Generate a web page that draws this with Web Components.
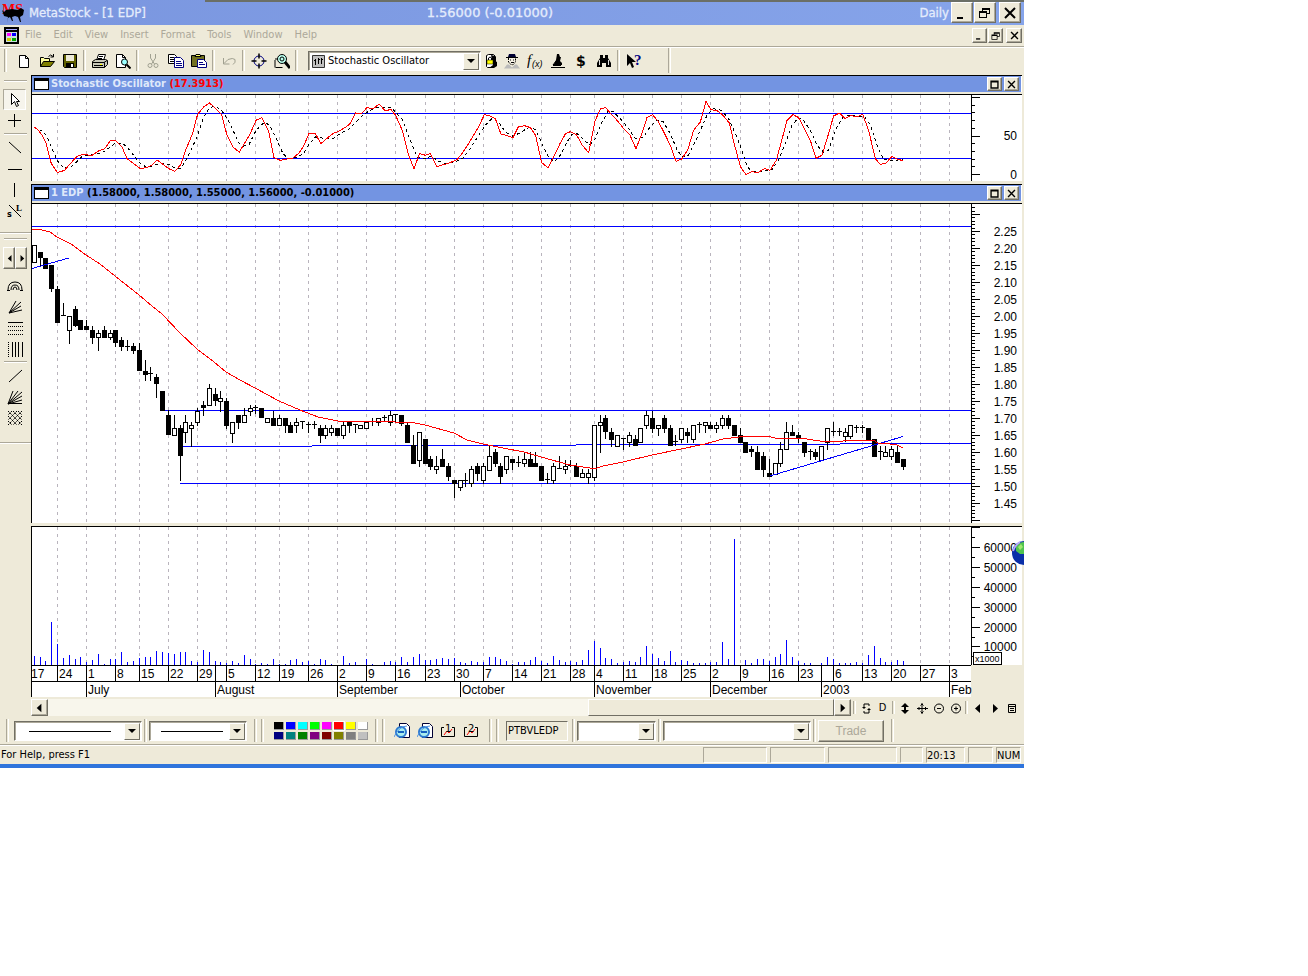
<!DOCTYPE html>
<html lang="en">
<head>
<meta charset="utf-8">
<title>MetaStock - [1 EDP]</title>
<style>
:root{--face:#eeead9;--blue:#7394e2;--shade:#aca899;--ui:"DejaVu Sans Condensed","DejaVu Sans",sans-serif}
body{margin:0;background:#fff;font:11px/16px var(--ui);color:#000}
</style>
</head>
<body>
<ms-app></ms-app>
<script>
const define=(name,html,setup)=>customElements.define(name,class extends HTMLElement{
  constructor(){super();this.attachShadow({mode:'open'})}
  connectedCallback(){
    this.shadowRoot.innerHTML=typeof html==='function'?html(this):html;
    if(setup)setup(this);
  }
});
const a=(el,n,d='')=>el.getAttribute(n)??d;

/* ---------- icons, 16 x 16 grid ---------- */
const K='stroke="#000" fill="none"';
const ICONS={
  new:'<path d="M3.5 2.5h6l3 3v9h-9z" fill="#fff" stroke="#000"/><path d="M9.5 2.5v3h3" '+K+'/>',
  open:'<path d="M1.5 13.5v-9h3l1 1h5v3" fill="#ffffa0" stroke="#000"/><path d="M1.5 13.5l3-5h11l-4 5z" fill="#808000" stroke="#000"/><path d="M9.500 3.500q2-3 4.500 0M14.500 1v3h-3" '+K+'/>',
  save:'<path d="M1.500 1.500h13v13h-12l-1-1z" fill="#606000" stroke="#000"/><path d="M4 2h8v6H4z" fill="#ece9d8"/><path d="M4 10h8v4H4z" fill="#000"/><path d="M9 11h2v3H9z" fill="#fff"/>',
  print:'<path d="M4.500 7.500l2-6h7l-2 6z" fill="#fff" stroke="#000"/><path d="M7 3.500h4M6 5.500h4" '+K+'/><path d="M.5 8.500l3-2h10l2 1v4l-3 3h-12z" fill="#c8c8b8" stroke="#000"/><path d="M.5 9.500h12v5M12 9.500l3-2M2 12.500h9" '+K+'/><path d="M8 11h2v1H8z" fill="#ff0"/>',
  preview:'<path d="M1.500 1.500h6l3 3v10h-9z" fill="#fff" stroke="#000"/><path d="M7.500 1.500v3h3" '+K+'/><circle cx="9.500" cy="9" r="3" fill="#9ff" stroke="#000"/><path d="M11.500 11.500l4 4" stroke="#000" stroke-width="2"/>',
  cut:'<g stroke="#a0a090" fill="none"><path d="M5.500 1v4l4 6M10.500 1v4l-4 6"/><circle cx="5" cy="12.500" r="2"/><circle cx="11" cy="12.500" r="2"/></g>',
  copy:'<path d="M.5 1.500h6l2 2v7h-8z" fill="#fff" stroke="#000"/><path d="M2 4.500h4M2 6.500h5M2 8.500h5" '+K+'/><path d="M6.500 4.500h6l3 3v7h-9z" fill="#fff" stroke="#000080"/><path d="M8 8.500h5M8 10.500h6M8 12.500h6" stroke="#000080"/>',
  paste:'<path d="M.5 2.500h13v11h-13z" fill="#707020" stroke="#000"/><path d="M4 3.500h6l-1-2H5z" fill="#ff6" stroke="#000"/><path d="M6.500 6.500h6l3 3v5h-9z" fill="#fff" stroke="#000080"/><path d="M8 9.500h4M8 11.500h6" stroke="#000080"/>',
  undo:'<path d="M2.500 5v6h6M3 10.500l4-4q5-2 7 0 1 3-2 5" stroke="#a0a090" fill="none"/>',
  target:'<circle cx="8" cy="8" r="5" stroke="#000080" fill="none"/><path d="M8 .5v5M8 10.500v5M.5 8h5M10.500 8h5" stroke="#000" stroke-width="1.500"/>',
  zoom:'<path d="M1 14.500V7m0-1h5M1.500 14.500h7" '+K+'/><circle cx="8" cy="6" r="4.500" fill="#bfe" stroke="#000"/><circle cx="8" cy="6" r="2" '+K+'/><path d="M11 9l5 6" stroke="#000" stroke-width="3"/>',
  lock:'<path d="M3.500 2.500l2-1h5l2 2v9l-2 2h-6l-1-1z" fill="#fff" stroke="#000"/><path d="M8 2l4 1v5l2 1v4l-3 2H6l4-3z" fill="#000"/><path d="M4 7h6v4H4z" fill="#ff0" stroke="#000" stroke-width=".5"/><path d="M5.500 7V5q1.500-2 3 0v2" '+K+'/>',
  man:'<path d="M4 4l1-3h6l1 3z" fill="#003"/><path d="M2 4.500h12" '+K+'/><path d="M4.500 5v4l3 3h1l3-3V5" fill="#f4f0e4" stroke="#000" stroke-dasharray="2 1"/><path d="M6 7h1M9 7h1M7 9.500h3" stroke="#000"/><path d="M0 15.500l3-4h2l3 3 3-3h2l3 4z" fill="#bbb"/>',
  fx:'<text x="0" y="12" font-family="Liberation Serif,serif" font-style="italic" font-size="15">f</text><text x="5" y="14" font-family="Liberation Sans,sans-serif" font-style="italic" font-size="9">(x)</text>',
  wizard:'<path d="M1 14h14v1H1zM3 11h8v2H3z"/><path d="M7 1h2l1 3h1l-1 4 2 2v2H7L4 11l2-4z"/><path d="M3 12l3-4" '+K+'/>',
  dollar:'<text x="3" y="13" font-family="DejaVu Sans,sans-serif" font-weight="bold" font-size="14">$</text>',
  binoc:'<path d="M4 2h3v3h2V2h3v3l3 5v4h-5v-4H6v4H1v-4l3-5z"/><path d="M3.500 7v5M12.500 7v5" stroke="#ddd"/>',
  help:'<path d="M1 1v12l3-3 2 5 2-1-2-5h4z" fill="#000"/><text x="8" y="12" font-family="Liberation Serif,serif" font-weight="bold" font-size="15" fill="#000080">?</text>',
  pointer:'<path d="M4.500 1.500v11l3-3 2 5 2-1-2-4h3z" fill="#fff" stroke="#000"/>',
  cross:'<path d="M7.500 1v13M1 7.500h13" '+K+'/>',
  diag:'<path d="M2 2l12 11" '+K+'/>',
  horiz:'<path d="M1 8.500h14" '+K+'/>',
  vert:'<path d="M7.500 1v14" '+K+'/>',
  sl:'<path d="M2 2l12 12" '+K+'/><text x="0" y="14" font-family="DejaVu Sans,sans-serif" font-weight="bold" font-size="8">s</text><text x="9" y="8" font-family="Liberation Serif,serif" font-weight="bold" font-size="9">L</text>',
  arcs:'<path d="M1 12q0-8 7-8t7 8M4 12q0-5 4-5t4 5M6 12q0-3 2-3t2 3M0 12.500h3M13 12.500h3" '+K+'/>',
  fan:'<path d="M2 14L14 3M2 14L14 7M2 14L15 11M2 14L9 2" '+K+'/>',
  dots:'<path d="M1 2.500h15" stroke="#000"/><path d="M1 6.500h15M1 10.500h15M1 14.500h15" stroke="#000" stroke-dasharray="1 1"/>',
  vlines:'<path d="M5.500 1v15M8.500 1v15M11.500 1v15M15.500 1v15" stroke="#000"/><path d="M1.500 1v15" stroke="#000" stroke-dasharray="1 1"/>',
  line:'<path d="M2 14L15 2" '+K+'/>',
  gann:'<path d="M1 15L6 2M1 15L11 2M1 15L15 3M1 15L15 7M1 15L15 11M1 14.500h14" '+K+'/>',
  hatch:'<path d="M1 1l14 14M1 6l9 9M1 11l4 4M6 1l9 9M11 1l4 4M15 1L1 15M15 6l-9 9M15 11l-4 4M10 1L1 10M5 1L1 5" stroke="#000" stroke-dasharray="2 1"/>',
  ie:'<path d="M5.500.5h7l3 3v11h-10z" fill="#fff" stroke="#003"/><circle cx="7" cy="9" r="5" fill="#aee" stroke="#2a78d0" stroke-width="2"/><path d="M4 9h6" stroke="#1560c0" stroke-width="2"/><path d="M0 14Q5 3 13 3" stroke="#4a90e0" fill="none"/>',
  one:'<path d="M4 4.500H1.500v9h13v-9H12" fill="none" stroke="#000"/><path d="M4 12l3-4 2 2 3-4" stroke="#f00" fill="none"/><text x="5" y="9" font-family="DejaVu Sans,sans-serif" font-size="10">1</text>',
  two:'<path d="M4 4.500H1.500v9h13v-9H12" fill="none" stroke="#000"/><path d="M4 12l3-4 2 2 3-4" stroke="#f00" fill="none"/><text x="5" y="9" font-family="DejaVu Sans,sans-serif" font-size="10">2</text>',
  left:'<path d="M10 4v9L5 8.500z"/>', right:'<path d="M6 4v9l5-4.500z"/>',
  refresh:'<path d="M11 6V4H6v3M6 11v2h5v-3" '+K+'/><path d="M4 7h4L6 9zM9 10h4l-2-2z"/>',
  updown:'<path d="M8 3l4 4H9v3h3l-4 4-4-4h3V7H4z"/>',
  move:'<path d="M8 3v11M3 8.500h11M6.500 5.500L8 4l1.500 1.500M6.500 11.500L8 13l1.500-1.500M5.500 7L4 8.500 5.500 10M11 7l1.500 1.500L11 10" '+K+'/>',
  minus:'<circle cx="8" cy="8.500" r="4.500" '+K+'/><path d="M6 8.500h4" '+K+'/>',
  plus:'<circle cx="8" cy="8.500" r="4.500" '+K+'/><path d="M6 8.500h4M8 6.500v4" '+K+'/>',
  list:'<path d="M4.500 4.500h7v8h-7zM5 6.500h6M6 8.500h4M6 10.500h4" '+K+'/>',
  min:'<path d="M3 12h6v2H3z"/>',
  restore:'<path d="M5 3h8v6h-3v4H2V6h3zM6 5v1h4v2h2V5zM3 8v4h6V8z" fill-rule="evenodd"/>',
  max:'<path d="M2 2h12v12H2zM4 5v7h8V5z" fill-rule="evenodd"/>',
  close:'<path d="M3 3l10 10M13 3L3 13" stroke="#000" stroke-width="2"/>'
};
const icon=(n,s=16)=>`<svg width="${s}" height="${s}" viewBox="0 0 16 16" aria-hidden="true">${ICONS[n]||''}</svg>`;

define('ms-tool',el=>`<style>
:host{display:block;width:23px;height:21px;flex:none}
button{width:100%;height:100%;padding:0;border:0;background:none;display:grid;place-items:center;font:inherit;color:inherit}
svg{display:block}
:host([raised]) button{background:var(--face);border:1px solid;border-color:#fff #716f64 #716f64 #fff;box-shadow:inset -1px -1px var(--shade)}
:host([pressed]) button{background:#f6f4ec;border:1px solid;border-color:var(--shade) #fff #fff var(--shade)}
</style><button type="button" aria-label="${a(el,'label',a(el,'icon'))}">${a(el,'icon')?icon(a(el,'icon'),a(el,'size',16)):'<slot></slot>'}</button>`);

define('ms-sep',`<style>:host{display:block;flex:none;width:1px;margin:0 2px;border-left:1px solid var(--shade);border-right:1px solid #fff;box-sizing:content-box;align-self:stretch}
:host([flat]){width:auto;height:0;margin:2px 4px;border:0;border-top:1px solid var(--shade);border-bottom:1px solid #fff}</style>`);

define('ms-titlebar',`<style>
:host{display:grid;grid-template-columns:5fr 7fr;height:25px;background:linear-gradient(90deg,#7a96df,#86a4ea);position:relative;color:#e4ecfc;font:13px/22px "DejaVu Sans Condensed",sans-serif;-webkit-text-stroke:0.3px}
:host::before{content:"";position:absolute;left:20%;right:0;top:0;height:2px;background:#6b6f66}
div{display:flex;align-items:center}
.l svg{margin:0 4px 0 2px}
.v{font-family:"DejaVu Sans",sans-serif}
.b{gap:1px;padding-right:3px}.b ms-tool{width:22px}.b ms-tool:last-child{margin-left:2px}
.d{margin-left:auto;margin-right:2px}
</style>
<div class="l"><svg width="23" height="22" viewBox="0 0 23 22" aria-hidden="true"><text x="0" y="12" font-family="Liberation Serif,serif" font-weight="bold" font-size="14" fill="#f00">MS</text><path d="M0 8l2 2 2-2 6-1 6 1 3-2 3 2-1 5-3 2 1 5h-1l-2-5-3-1-3 1 1 4h-1l-2-4-2 1-1 5H5l1-6-4-1z"/></svg><span>MetaStock - [1 EDP]</span></div>
<div><span class="v">1.56000 (-0.01000)</span><span class="d">Daily</span><div class="b"><ms-tool raised icon="min" label="Minimize"></ms-tool><ms-tool raised icon="restore" label="Restore"></ms-tool><ms-tool raised icon="close" label="Close"></ms-tool></div></div>`);

define('ms-menubar',`<style>
:host{display:flex;align-items:center;height:21px;border-bottom:1px solid var(--shade);box-shadow:0 1px #fff;color:#aca899}
nav{display:flex;gap:12px;margin-left:6px;flex:1;line-height:18px;padding-bottom:2px}
a{color:inherit;text-decoration:none}
svg{margin-left:4px}
.b{display:flex;gap:1px;padding-right:2px}.b ms-tool{width:15px;height:15px}.b ms-tool:last-child{margin-left:2px;width:16px}
</style>
<svg width="15" height="17" viewBox="0 0 15 17" aria-hidden="true"><path d="M0 0h15v17H0z"/><path d="M2 2h11v1H2z" fill="#aaf"/><path d="M2 5h11v10H2z" fill="#cdd"/><path d="M3 6h4v3H3z" fill="#f0f"/><path d="M8 6h4v3H8z" fill="#00f"/><path d="M3 11h4v3H3z" fill="#cc0"/><path d="M8 11h4v3H8z" fill="#0a0"/></svg>
<nav>${['File','Edit','View','Insert','Format','Tools','Window','Help'].map(t=>`<a href="#${t.toLowerCase()}">${t}</a>`).join('')}</nav>
<div class="b"><ms-tool raised icon="min" size="11" label="Minimize chart"></ms-tool><ms-tool raised icon="restore" size="12" label="Restore chart"></ms-tool><ms-tool raised icon="close" size="11" label="Close chart"></ms-tool></div>`);

define('ms-combo',el=>`<style>
:host{display:block;position:relative;flex:none;height:20px}
select{appearance:none;width:100%;height:100%;border:1px solid;border-color:#716f64 #fff #fff #716f64;box-shadow:inset 1px 1px var(--shade);background:#fff;border-radius:0;margin:0;padding:0 18px 0 ${a(el,'icon')?19:4}px;font:11px/16px var(--ui);color:#000}
i{position:absolute;right:2px;top:2px;bottom:1px;width:14px;background:var(--face);border:1px solid;border-color:#fff #716f64 #716f64 #fff;display:grid;place-items:center;pointer-events:none}
.k{position:absolute;left:4px;top:4px}
.s{position:absolute;left:12%;right:24%;top:10px;border-top:1px solid #000}
</style><select aria-label="${a(el,'label')}"><option>${a(el,'value')}</option></select>${el.hasAttribute('sample')?'<span class="s"></span>':''}
${a(el,'icon')?'<svg class="k" width="13" height="13" viewBox="0 0 13 13"><path d="M.5.5h12v12H.5z" fill="#c0c0c0" stroke="#333"/><path d="M3.500 4v6M2 5.500h2M6.500 3v6M6 4.500h2M9.500 3v6M9 4.500h2" stroke="#000"/></svg>':''}
<i><svg width="8" height="4"><path d="M0 0h8L4 4z"/></svg></i>`);

define('ms-toolbar',`<style>
:host{display:flex;align-items:center;height:27px;padding:0 0 0 4px}
ms-combo{width:173px;margin-left:8px}
.n{width:19px}.g{margin:2px 5px 2px 0}ms-sep{margin:3px 2px}.e{margin:1px 0 1px 23px}
</style><ms-sep class="g"></ms-sep>
<ms-tool icon="new"></ms-tool><ms-tool icon="open"></ms-tool><ms-tool icon="save"></ms-tool><ms-sep></ms-sep>
<ms-tool icon="print"></ms-tool><ms-tool icon="preview"></ms-tool><ms-sep></ms-sep>
<ms-tool icon="cut"></ms-tool><ms-tool icon="copy"></ms-tool><ms-tool icon="paste"></ms-tool><ms-sep></ms-sep>
<ms-tool icon="undo"></ms-tool><ms-sep></ms-sep><ms-tool icon="target"></ms-tool><ms-tool icon="zoom"></ms-tool><ms-sep></ms-sep>
<ms-combo icon="1" value="Stochastic Oscillator" label="Indicator"></ms-combo>
<ms-tool class="n" icon="lock"></ms-tool><ms-tool icon="man"></ms-tool><ms-tool icon="fx"></ms-tool><ms-tool icon="wizard"></ms-tool><ms-tool icon="dollar"></ms-tool><ms-tool icon="binoc"></ms-tool><ms-sep></ms-sep><ms-tool icon="help"></ms-tool><ms-sep class="e"></ms-sep>`);

define('ms-drawbar',`<style>
:host{display:flex;flex-direction:column;width:31px;padding-top:3px;box-sizing:border-box}
ms-tool{margin-left:3px}.pair{display:flex;margin:5px 0 6px 3px}.pair ms-tool{width:12px;height:22px;margin:0}
.big{margin:11px 0 2px}.end{margin:14px 0 0}.grip{margin-bottom:7px}
</style><ms-sep flat class="grip"></ms-sep>
<ms-tool pressed icon="pointer"></ms-tool><ms-tool icon="cross"></ms-tool><ms-sep flat></ms-sep>
<ms-tool icon="diag"></ms-tool><ms-tool icon="horiz"></ms-tool><ms-tool icon="vert"></ms-tool><ms-tool icon="sl"></ms-tool>
<ms-sep flat class="big"></ms-sep><ms-sep flat></ms-sep>
<div class="pair"><ms-tool raised icon="left" size="12"></ms-tool><ms-tool raised icon="right" size="12"></ms-tool></div>
<ms-tool icon="arcs"></ms-tool><ms-tool icon="fan"></ms-tool><ms-tool icon="dots"></ms-tool><ms-tool icon="vlines"></ms-tool><ms-sep flat></ms-sep>
<ms-tool icon="line"></ms-tool><ms-tool icon="gann"></ms-tool><ms-tool icon="hatch"></ms-tool><ms-sep flat class="end"></ms-sep>`);

define('ms-pane',el=>`<style>
:host{display:block;border-top:1px solid #000;border-left:1px solid #000;margin-bottom:3px;background:#fff}
header{display:flex;align-items:center;height:16px;margin-right:1px;background:var(--blue);font-weight:bold;color:#dfe8fa;white-space:nowrap}
.w{width:13px;height:8px;border:1px solid #000;border-top-width:3px;background:#fff;margin:0 2px}
.f{height:2px;background:var(--face);border-bottom:1px solid #000}
.t{flex:1}ms-tool{width:15px;height:14px;margin-right:2px}
</style>${a(el,'name')?`<header><span class="w"></span><span class="t">${a(el,'name')} <slot name="value"></slot></span><ms-tool raised icon="max" size="11" label="Maximize"></ms-tool><ms-tool raised icon="close" size="11" label="Close"></ms-tool></header><div class="f"></div>`:''}<slot></slot>`);

/* ---------- chart data ---------- */
const X=i=>Math.floor(34.2+5.834*i)+.5;
const WEEKS=[57,86,115,139,168,197,226,255,279,308,337,366,395,425,454,483,512,541,570,594,623,652,681,710,740,769,798,833,862,891,920,949];
const DATES=[24,1,8,15,22,29,5,12,19,26,2,9,16,23,30,7,14,21,28,4,11,18,25,2,9,16,23,6,13,20,27,3];
const MONTHS=[[86,'July'],[215,'August'],[337,'September'],[460,'October'],[594,'November'],[710,'December'],[821,'2003'],[949,'Feb']];
/* each candle: wick top, body top, body bottom, wick bottom, f(illed) / h(ollow) / d(oji) */
const CANDLES=`245 245 262 262 h;252 252 257 265 f;258 258 268 268 f;265 265 288 291 f;286 289 322 322 f;303 315 315 315 d;316 316 330 343 h;306 309 325 326 f;320 320 329 329 f;320 326 329 329 f;326 330 337 343 f;330 333 337 350 h;326 330 337 337 f;330 333 337 339 h;330 330 342 346 f;337 340 346 350 f;340 346 346 350 d;343 346 350 353 f;343 350 370 370 f;360 371 374 380 f;367 373 373 380 d;374 377 383 397 f;391 391 410 410 f;410 415 434 434 f;415 428 435 435 h;425 428 455 480 f;415 422 432 442 h;422 425 428 446 h;408 411 422 425 h;401 405 407 415 f;384 388 405 405 h;388 394 400 405 f;391 398 401 411 h;398 401 425 428 f;422 422 433 442 h;415 415 422 428 f;408 415 422 422 h;405 408 411 415 h;405 407 407 413 d;408 408 417 417 f;418 418 422 422 h;411 418 425 425 f;415 418 425 425 h;418 418 425 432 f;422 425 432 432 f;418 422 425 432 h;421 421 421 428 d;422 424 424 432 d;421 424 424 428 d;425 428 435 442 f;425 428 435 438 h;425 428 432 435 h;428 428 435 435 f;422 425 435 438 h;422 422 425 432 f;424 424 424 432 d;425 425 428 428 h;422 422 428 428 h;418 421 421 425 d;418 418 422 425 h;415 417 417 421 d;411 415 422 425 h;414 414 414 422 d;415 415 423 425 f;422 425 442 442 f;435 445 463 463 f;432 432 460 466 h;439 439 463 463 f;456 459 466 469 f;456 466 469 473 h;449 459 466 466 f;463 466 476 480 f;480 480 483 497 f;480 480 487 490 h;473 480 480 486 d;466 469 483 486 h;463 466 473 480 f;463 466 480 483 h;446 456 470 470 h;449 452 463 466 f;463 466 476 483 f;456 456 469 473 h;459 459 462 469 f;456 462 462 466 d;452 459 463 466 h;452 459 466 466 f;452 463 466 466 f;466 466 480 480 f;473 479 479 483 d;463 466 480 483 h;456 468 468 468 d;460 466 469 473 h;460 465 465 466 d;463 466 476 476 f;469 473 477 477 h;469 473 477 483 h;425 425 477 480 h;415 422 425 452 h;415 418 431 438 f;428 432 439 446 f;435 435 446 446 h;438 438 438 449 d;432 435 442 446 h;435 439 445 445 f;428 428 442 442 h;411 415 425 428 h;411 418 428 432 f;425 425 428 435 h;415 418 428 432 f;425 428 445 445 f;435 441 441 445 d;428 428 439 442 h;428 432 435 442 f;425 425 439 442 h;422 424 424 432 d;422 422 425 432 h;422 425 428 428 f;422 425 428 432 h;415 418 425 428 h;415 418 425 428 f;425 425 435 435 f;428 435 442 442 f;442 442 452 452 f;446 449 451 456 f;446 452 469 469 f;452 456 469 476 f;459 473 476 476 f;463 463 474 474 h;442 449 463 466 h;422 432 449 449 h;425 432 435 435 f;432 435 438 442 f;442 442 452 456 f;449 451 451 459 d;449 452 456 459 f;446 446 460 460 h;428 428 442 449 h;422 431 431 435 d;428 431 431 435 d;428 432 436 441 h;425 425 436 438 h;425 427 427 432 d;425 427 427 432 d;428 428 439 439 f;439 439 456 456 f;446 451 451 459 d;446 452 456 456 h;446 449 456 459 h;446 452 462 462 f;459 459 466 469 f`.split(';').map(s=>s.split(' '));
const VOLUME=[9,8,4,43,21,7,10,6,8,3,5,11,1,6,6,13,3,4,7,8,8,14,13,12,11,13,13,4,3,15,13,4,3,2,4,2,10,6,1,2,1,6,1,1,5,6,3,4,1,6,5,1,0,9,2,3,0,6,1,0,3,4,3,8,3,8,11,5,5,6,7,6,7,3,2,4,3,3,8,8,6,4,1,3,3,5,8,4,2,9,5,3,4,3,5,15,24,17,7,6,2,3,4,3,8,19,11,7,4,14,3,5,4,2,2,2,3,3,23,6,126,0,5,2,6,6,4,8,11,25,8,4,2,2,0,2,8,6,2,2,2,3,2,10,19,7,3,3,5,4];
/* oscillator lines, in thirds of a pixel from the pane's left edge */
const OSC='12,110 24,120 36,135 48,160 54,185 63,220 82,247 103,240 120,220 140,198 157,193 185,195 205,182 222,176 242,149 258,152 275,170 290,205 310,220 330,235 348,232 365,225 380,209 398,222 415,235 434,243 452,222 466,180 486,132 502,72 520,50 538,38 556,55 574,72 590,135 608,170 627,186 645,155 660,130 677,90 694,82 715,122 731,202 750,210 770,206 788,203 806,188 820,168 836,130 855,130 872,160 890,144 908,130 926,122 942,113 958,102 976,68 994,70 1010,52 1028,56 1046,41 1064,61 1082,58 1096,75 1116,120 1135,195 1151,235 1168,190 1186,195 1200,190 1220,229 1240,223 1257,218 1280,208 1295,190 1315,160 1345,110 1362,73 1380,77 1395,85 1412,132 1428,135 1448,142 1464,110 1482,106 1500,112 1516,135 1534,217 1553,232 1570,200 1590,158 1606,130 1621,124 1639,134 1656,165 1675,187 1694,92 1710,56 1726,52 1743,72 1762,92 1780,115 1798,132 1817,175 1834,132 1850,82 1867,73 1885,95 1903,130 1920,165 1937,213 1954,206 1972,180 1990,120 2010,95 2027,34 2042,58 2062,62 2078,75 2097,98 2113,165 2131,230 2147,253 2165,244 2183,247 2202,235 2219,240 2238,210 2253,155 2270,90 2288,73 2305,82 2322,115 2340,150 2357,204 2375,195 2395,130 2410,77 2427,68 2444,84 2462,76 2480,80 2497,72 2515,120 2535,205 2550,223 2567,218 2585,198 2602,207 2618,211';
const SIG='12,110 34,121 50,138 65,175 82,212 100,233 120,232 138,216 155,199 180,192 205,190 222,184 240,170 256,158 275,158 290,170 310,195 330,220 348,230 365,228 380,222 398,219 415,222 432,232 450,235 466,212 486,172 502,135 520,80 538,52 556,48 574,60 590,84 608,120 627,160 640,167 656,163 675,125 690,105 705,96 720,108 740,150 758,190 775,205 800,201 820,190 838,160 856,140 875,143 908,145 930,130 958,115 976,96 1000,72 1025,57 1046,50 1082,52 1096,65 1116,88 1140,150 1160,200 1180,206 1205,197 1222,212 1245,219 1270,216 1298,204 1320,175 1345,135 1365,105 1385,85 1405,95 1425,125 1448,138 1470,127 1495,112 1515,117 1535,160 1555,200 1572,215 1590,195 1610,155 1625,132 1640,130 1660,148 1678,164 1695,145 1715,95 1735,60 1750,65 1770,85 1795,115 1815,145 1840,140 1858,112 1880,90 1898,94 1920,130 1940,178 1955,200 1972,198 1990,165 2010,120 2030,75 2050,55 2072,60 2095,85 2115,130 2135,180 2150,228 2165,243 2200,243 2225,238 2245,210 2265,160 2285,105 2305,82 2320,90 2340,120 2360,165 2380,185 2395,180 2415,120 2435,84 2450,76 2490,78 2502,77 2520,105 2540,165 2560,208 2590,211 2618,207';
const scale=s=>s.split(' ').map(p=>{const[x,y]=p.split(',');return (30.3+x/3).toFixed(1)+','+(90.3+y/3).toFixed(1)}).join(' ');
const grid=(t,b)=>`<path d="${WEEKS.map(x=>`M${x+.5} ${t}V${b}`).join('')}" stroke="#b9b4bd" stroke-dasharray="3 4"/>`;
const tick=(y,l)=>`M971 ${Math.round(y)+.5}h${l}`;
const hl=(x1,x2,y)=>`M${x1} ${y}.5H${x2}`;
const svg=(t,h,body,label)=>`<style>:host{display:block}svg{display:block;overflow:visible;width:100%;height:auto;font:12px "Liberation Sans",sans-serif}.p{shape-rendering:crispEdges}path,polyline{fill:none}</style><svg viewBox="32 ${t} 990 ${h}" role="img" aria-label="${label}">${body}</svg>`;
const lab=(y,s)=>`<text x="1017" y="${y}" text-anchor="end">${s}</text>`;

define('ms-oscillator',()=>{
  let t='';for(let i=0;i<=10;i++)t+=tick(97+i*7.7,i%5?4:9);
  return svg(95,86,`${grid(95,181)}<g class="p"><path d="${hl(32,971,113)}${hl(32,971,158)}" stroke="#00f"/><path d="M971.5 95V181${t}" stroke="#000"/><polyline points="${scale(SIG)}" stroke="#000" stroke-dasharray="3 3"/><polyline points="${scale(OSC)}" stroke="#f00"/></g>${lab(140,50)}${lab(179,0)}`,'Stochastic oscillator')});

define('ms-price',()=>{
  let t='',l='';
  for(let c=232;c>=140;c--){t+=tick(231+(225-c)*3.4,c%5?4:9);if(c%5===0&&c<=225&&c>=145)l+=lab(Math.round(236+(225-c)*3.4),(c/100).toFixed(2))}
  const c=CANDLES.map(([h,t,b,lo,k],i)=>{h=+h;t=+t;b=+b;lo=+lo;const x=X(i);
    if(k==='d')return `<path d="M${x} ${h}V${lo+1}M${x-2.5} ${t+.5}h5" stroke="#000"/>`;
    return `<path d="M${x} ${h}V${t}M${x} ${b}V${lo+1}" stroke="#000"/><rect x="${x-2}" y="${t+.5}" width="4" height="${b-t}" fill="${k==='f'?'#000':'#fff'}" stroke="#000"/>`}).join('');
  return svg(204,319,`${grid(204,523)}<g class="p"><path d="${hl(32,971,226)}${hl(162,971,410)}${hl(180,312,446)}${hl(312,576,445)}${hl(576,840,444)}${hl(840,971,443)}${hl(180,971,483)}" stroke="#00f"/>${c}
<path d="M32 268.500L69 258M770 476L903 436.500" stroke="#00f"/>
<polyline stroke="#f00" points="32,229 42,230 50,232 57,237 71,244 86,255 100,264 115,276 139,295 152,306 162,314 180,333 197,349 214,362 226,372 240,380 255,388 279,401 300,410 318,417 338,421 380,421 395,422 410,422 425,425 454,433 467,440 483,444 503,448 524,452 541,457 570,465 590,468 597,468 603,466 623,462 652,455 681,449 705,444 723,439 747,436 767,436 775,438 800,438 820,441 843,441 847,440 873,440 878,443 890,444 897,445 903,448"/>
<path d="M971.500 204V523${t}" stroke="#000"/></g>${l}`,'1 EDP daily candles')});

define('ms-volume',()=>{
  let t=tick(527,9)+tick(537,4),l='';
  for(let i=1;i<=6;i++){const y=666.3-i*19.9;t+=tick(y,9)+tick(y+10,4);l+=lab(Math.round(y)+5,i*10000)}
  return svg(527,170,`${grid(527,665)}<g class="p"><path d="${VOLUME.map((v,i)=>v?`M${X(i)} 665v${-v}`:'').join('')}" stroke="#00f"/>
<path d="M971.500 527V665${t}" stroke="#000"/></g>${l}<g class="p"><rect x="971" y="665" width="51" height="32" style="fill:var(--face)"/><rect x="973.500" y="652.500" width="28" height="12" fill="#fff" stroke="#000"/>
<path d="M32 665.500H971M32 681.500H971${WEEKS.map(x=>`M${x+.5} 665V681`).join('')}${MONTHS.map(([x])=>`M${x+.5} 681V697`).join('')}M215.500 665V681M821.500 665V681" stroke="#000"/></g>
<text x="975" y="662" font-size="9">x1000</text><text x="31" y="678">17</text>${WEEKS.map((x,i)=>`<text x="${x+2}" y="678">${DATES[i]}</text>`).join('')}
${MONTHS.map(([x,m])=>`<text x="${x+2}" y="694">${m}</text>`).join('')}`,'Volume in thousands')});

define('ms-scroll',`<style>
:host{display:flex;align-items:center;height:17px;background:var(--face)}
.track{display:flex;width:820px;flex:0 1 820px;background:#f8f6ec;height:17px}
ms-tool{width:17px;height:17px}
.thumb{margin-left:auto;width:246px;box-sizing:border-box;border:1px solid;border-color:#fff #716f64 #716f64 #fff;background:var(--face)}
ms-sep{margin:2px 1px}.x{display:flex;align-items:center;margin-left:1px}
</style><div class="track"><ms-tool raised icon="left" size="15"></ms-tool><div class="thumb"></div><ms-tool raised icon="right" size="15"></ms-tool></div>
<div class="x"><ms-sep></ms-sep><ms-tool icon="refresh"></ms-tool><ms-tool label="Daily">D</ms-tool><ms-sep></ms-sep><ms-tool icon="updown"></ms-tool><ms-tool icon="move"></ms-tool><ms-tool icon="minus"></ms-tool><ms-tool icon="plus"></ms-tool><ms-sep></ms-sep><ms-tool icon="left"></ms-tool><ms-tool icon="right"></ms-tool><ms-tool icon="list"></ms-tool></div>`);

define('ms-palette',`<style>
:host{display:grid;grid-template-columns:repeat(8,10px);grid-auto-rows:8px;gap:2px;flex:none;margin-left:5px}
button{padding:0;border:1px solid #999;border-width:0 1px 1px 0}
button[aria-pressed]{outline:1px solid #fff}
</style>${['#000','#00f','#0ff','#0f0','#f0f','#f00','#ff0','#fff','#000080','#008080','#008000','#800080','#800000','#808000','#808080','#c0c0c0'].map(c=>`<button type="button" aria-label="Colour ${c}" ${c==='#f00'?'aria-pressed="true"':''} style="background:${c}"></button>`).join('')}`);

define('ms-linebar',`<style>
:host{display:flex;align-items:center;height:27px;padding:1px 0 0 4px;border-bottom:1px solid var(--shade);box-shadow:0 1px #fff}
ms-sep{margin:2px}.f{margin-right:5px}.p{margin-left:7px}.i{margin-right:7px}
input{box-sizing:border-box;width:62px;height:20px;padding:0 1px;border:1px solid;border-color:#716f64 #fff #fff #716f64;border-radius:0;background:var(--face);font:11px/16px var(--ui);color:#000}
input+ms-sep{margin-left:4px}
.trade{box-sizing:border-box;width:66px;height:22px;border:1px solid;border-color:#fff #716f64 #716f64 #fff;box-shadow:inset -1px -1px var(--shade);background:var(--face);color:#aca899;font:12px/16px "Liberation Sans",sans-serif;padding:0}
</style><ms-sep class="f"></ms-sep><ms-combo style="width:128px" sample label="Line style"></ms-combo><ms-sep></ms-sep><ms-combo style="width:98px" sample label="Line weight"></ms-combo>
<ms-sep class="p"></ms-sep><ms-sep class="f"></ms-sep><ms-palette></ms-palette>
<ms-sep class="p"></ms-sep><ms-sep class="f"></ms-sep><ms-tool icon="ie"></ms-tool><ms-tool icon="ie"></ms-tool><ms-tool icon="one"></ms-tool><ms-tool icon="two"></ms-tool>
<ms-sep class="p"></ms-sep><ms-sep class="i"></ms-sep><input aria-label="Symbol" value="PTBVLEDP"><ms-sep></ms-sep>
<ms-combo style="width:79px" label="Order type"></ms-combo><ms-sep></ms-sep><ms-combo style="width:148px" label="Account"></ms-combo><ms-sep></ms-sep><button class="trade" type="button" disabled>Trade</button><ms-sep class="p"></ms-sep>`);

define('ms-statusbar',`<style>
:host{display:flex;height:16px;padding:2px 3px 1px 1px;gap:3px;border-bottom:4px solid #2f74dc}
span{box-sizing:border-box;border:1px solid;border-color:var(--shade) #fff #fff var(--shade);line-height:15px;white-space:nowrap}
b{flex:1;font-weight:normal}
</style><b>For Help, press F1</b><span style="width:64px"></span><span style="width:55px"></span><span style="width:69px"></span><span style="width:23px"></span><span style="width:39px">20:13</span><span style="width:25px"></span><span style="width:25px">NUM</span>`);

define('ms-app',`<style>
:host{display:block;position:relative;max-width:1024px;background:var(--face);overflow:hidden}
main{display:grid;grid-template-columns:31px minmax(0,1fr);padding-right:2px;margin-top:1px}
ms-pane:last-of-type{margin-bottom:2px}
.globe{position:absolute;right:-12px;top:541px}
[slot=value]{color:#000}[slot].red{color:#f00}
</style>
<ms-titlebar></ms-titlebar><ms-menubar></ms-menubar><ms-toolbar></ms-toolbar>
<main><ms-drawbar></ms-drawbar><div>
<ms-pane name="Stochastic Oscillator"><span slot="value" class="red">(17.3913)</span><ms-oscillator></ms-oscillator></ms-pane>
<ms-pane name="1 EDP"><span slot="value">(1.58000, 1.58000, 1.55000, 1.56000, -0.01000)</span><ms-price></ms-price></ms-pane>
<ms-pane><ms-volume></ms-volume></ms-pane>
<ms-scroll></ms-scroll></div></main>
<ms-linebar></ms-linebar><ms-statusbar></ms-statusbar>
<svg class="globe" width="24" height="24" viewBox="0 0 24 24" aria-hidden="true"><circle cx="12" cy="12" r="12" fill="#0a2fa8"/><path d="M4 6q3-5 8-5v12H8L4 10z" fill="#4fc44f"/><path d="M6 6l3-3 2 3-3 3z" fill="#9fe86f"/><path d="M1 10q2-6 7-9" stroke="#b8a8f8" stroke-width="2" fill="none"/></svg>`);
</script>
</body>
</html>
